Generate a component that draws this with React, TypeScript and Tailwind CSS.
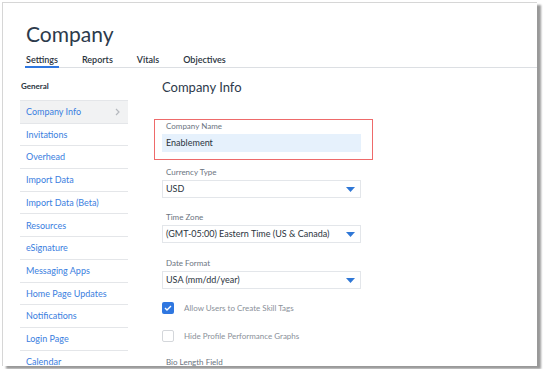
import React from "react";

const sideItems = [
  "Company Info",
  "Invitations",
  "Overhead",
  "Import Data",
  "Import Data (Beta)",
  "Resources",
  "eSignature",
  "Messaging Apps",
  "Home Page Updates",
  "Notifications",
  "Login Page",
  "Calendar",
];

const tabs = ["Settings", "Reports", "Vitals", "Objectives"];

function Caret() {
  return (
    <svg width="9" height="5" viewBox="0 0 9 5" className="shrink-0">
      <path d="M0 0 H9 L4.5 5 Z" fill="#2f77d6" />
    </svg>
  );
}

function SelectBox({ label, value, gap }: { label: string; value: string; gap: string }) {
  return (
    <div className={gap}>
      <div className="h-[10px] pl-[4px] text-[8px] leading-[10px] text-[#6b7480]">{label}</div>
      <div className="mt-[3px] flex h-[18px] w-[199px] items-center justify-between border border-[#e3e6ea] pl-[3px] pr-[5px] text-[9px] text-[#2b3440]">
        <span>{value}</span>
        <Caret />
      </div>
    </div>
  );
}

export default function App() {
  return (
    <div
      className="relative h-[369px] w-[543px] overflow-hidden bg-white"
      style={{ fontFamily: "Lato, 'Open Sans', sans-serif" }}
    >
      <div className="ml-[2px] mt-[2px] h-[364px] w-[535px] overflow-hidden border-l border-t border-[#d6d6d6] bg-white shadow-[4px_3px_2px_rgba(0,0,0,0.4)]">
        {/* header */}
        <div className="pl-[23px] pt-[18px] text-[21px] leading-[26px] text-[#2c3a4b]">Company</div>
        <div className="ml-[22px] mt-[7px] flex h-[14px] gap-[22px] border-b border-[#dcdfe3]">
          {tabs.map((t, i) => (
            <div
              key={t}
              className={
                "h-[14px] px-[1px] pt-[1px] text-[9px] font-semibold leading-[10px] text-[#2b3440] " +
                (i === 0 ? "border-b-[2px] border-[#2f77e0]" : "")
              }
            >
              {t}
            </div>
          ))}
        </div>

        <div className="flex">
          {/* sidebar */}
          <div className="ml-[17px] w-[108px] pt-[13px]">
            <div className="pl-[1px] text-[8px] font-bold leading-[10px] text-[#2b3440]">General</div>
            <div className="mt-[9px] border-t border-[#e4e6e9]">
              {sideItems.map((s, i) => (
                <div
                  key={s}
                  className={
                    "flex h-[22.7px] items-center justify-between border-b border-[#e4e6e9] pl-[6px] pr-[8px] text-[9px] text-[#3a7ee0] " +
                    (i === 0 ? "bg-[#f1f2f3]" : "")
                  }
                >
                  <span>{s}</span>
                  {i === 0 && (
                    <svg width="5" height="8" viewBox="0 0 5 8">
                      <path d="M1 1 L4 4 L1 7" stroke="#b5b9be" strokeWidth="1.2" fill="none" />
                    </svg>
                  )}
                </div>
              ))}
            </div>
          </div>

          {/* main */}
          <div className="ml-[34px] pt-[11px]">
            <div className="text-[13px] leading-[16px] text-[#2c3a4b]">Company Info</div>
            <div className="ml-[-8px] mt-[24px] h-[41px] w-[219px] border-[1.5px] border-[#ee6a6a] px-[7px] pt-[1px]">
              <div className="h-[10px] pl-[4px] text-[8px] leading-[10px] text-[#6b7480]">Company Name</div>
              <div className="mt-[3px] flex h-[18px] w-[199px] items-center bg-[#e6f1fc] pl-[4px] text-[9px] text-[#2b3440]">
                Enablement
              </div>
            </div>
            <SelectBox gap="mt-[7px]" label="Currency Type" value="USD" />
            <SelectBox gap="mt-[14px]" label="Time Zone" value="(GMT-05:00) Eastern Time (US & Canada)" />
            <SelectBox gap="mt-[15px]" label="Date Format" value="USA (mm/dd/year)" />

            <div className="mt-[13px] flex items-center">
              <div className="flex h-[12px] w-[12px] items-center justify-center rounded-[2px] bg-[#2f77e0]">
                <svg width="8" height="6" viewBox="0 0 8 6">
                  <path d="M1 3 L3 5 L7 1" stroke="white" strokeWidth="1.4" fill="none" />
                </svg>
              </div>
              <span className="ml-[10px] text-[8px] text-[#8a9099]">Allow Users to Create Skill Tags</span>
            </div>
            <div className="mt-[16px] flex items-center">
              <div className="h-[12px] w-[12px] rounded-[2px] border border-[#d4d7db] bg-white" />
              <span className="ml-[10px] text-[8px] text-[#8a9099]">Hide Profile Performance Graphs</span>
            </div>
            <div className="mt-[15px] pl-[4px] text-[8px] leading-[10px] text-[#6b7480]">Bio Length Field</div>
          </div>
        </div>
      </div>
    </div>
  );
}
